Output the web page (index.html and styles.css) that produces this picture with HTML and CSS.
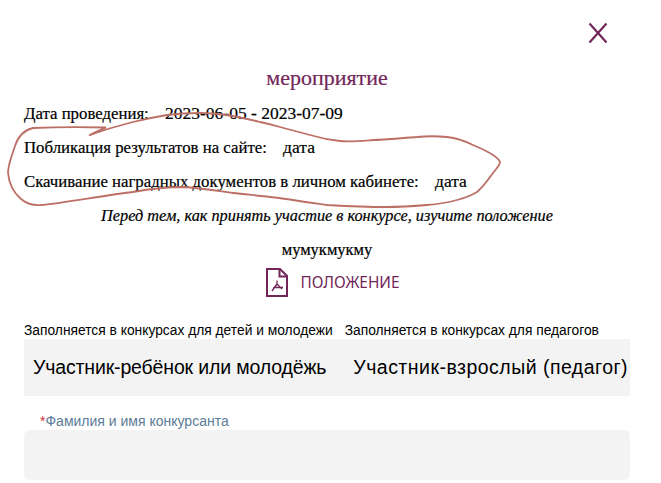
FILE: index.html
```html
<!DOCTYPE html>
<html lang="ru">
<head>
  <meta charset="UTF-8" />
  <title>Мероприятие</title>
  <link rel="stylesheet" href="styles.css">
</head>
<body>
  <div class="container">
    <div class="close-row">
      <svg class="close" width="20" height="22" viewBox="0 0 20 22"><path d="M1.500 1.500L18.500 20.500M18.500 1.500L1.500 20.500"/></svg>
    </div>
    <h1>мероприятие</h1>
    <p class="date">Дата проведения: <span class="value">2023-06-05 - 2023-07-09</span></p>
    <p class="date">Побликация результатов на сайте: <span class="value">дата</span></p>
    <p class="date">Скачивание наградных документов в личном кабинете: <span class="value">дата</span></p>
    <p class="note">Перед тем, как принять участие в конкурсе, изучите положение</p>
    <p class="desc">мумукмукму</p>
    <a class="doc" href="#">
      <svg class="pdf" width="22" height="29" viewBox="0 0 22 29">
        <path class="sheet" d="M1 1H14L21 8V28H1Z"/>
        <path class="sheet" d="M13.500 1V8.500H21"/>
        <path class="acro" d="M11 12.500V16L6 23M11 16L16 21M11 16.500L8 19.500H17"/>
      </svg>
      <span>ПОЛОЖЕНИЕ</span>
    </a>
    <div class="hints">
      <span>Заполняется в конкурсах для детей и молодежи</span>
      <span>Заполняется в конкурсах для педагогов</span>
    </div>
    <div class="tabs">
      <span class="tab-child">Участник-ребёнок или молодёжь</span>
      <span class="tab-adult">Участник-взрослый (педагог)</span>
    </div>
    <label class="field-label"><span class="req">*</span>Фамилия и имя конкурсанта</label>
    <div class="input"></div>
  </div>
  <svg class="scribble" width="661" height="483" viewBox="0 0 661 483">
    <path d="M89 135.500C95 132 100 130 106 127.500C85 127 55 127 33 128C24 130 18 137 15 146C11 158 8 165 8 173C9 184 14 193 21 199C27 204 33 206 42 205C65 203 100 196 133 192C155 188 170 187 183 187C200 188 218 191 233 193C250 195 275 197 293 200C310 203 320 204 327 205C345 206 370 207 387 207C400 207 415 206 427 205C440 204 450 202 457 200C465 198 472 195 477 192C483 187 488 180 493 173C497 168 500 165 500 162C499 159 496 157 493 155C487 151 480 148 473 145C465 141 457 138 447 137C437 136 427 136 417 137C402 138 385 140 373 140C360 141 350 142 340 141C330 140 320 138 310 135C300 132 290 130 280 127C270 124 265 123 260 122C245 118 220 113 200 113C185 113 175 114 167 115C155 117 145 119 133 122C118 126 100 131 89 135.500"/>
  </svg>
</body>
</html>
```

FILE: styles.css
```css
html, body {
  margin: 0;
  height: 483px;
  overflow: hidden;
  background: #fff;
}
body {
  font-family: 'Liberation Serif', serif;
  color: #000;
  position: relative;
  -webkit-text-stroke: 0.200px;
}
.container {
  padding: 0 31px 0 24px;
}
.close-row {
  display: flex;
  justify-content: flex-end;
  padding: 22px 22px 0 0;
}
.close {
  display: block;
}
.close path {
  fill: none;
  stroke: #722658;
  stroke-width: 2.200;
}
h1 {
  margin: 22px 0 0;
  font-size: 22px;
  line-height: 24px;
  font-weight: 400;
  text-align: center;
  color: #722658;
}
.date {
  margin: 13px 0 0;
  font-size: 16.800px;
  line-height: 21px;
}
.value {
  margin-left: 12px;
  font-size: 17.500px;
}
.note {
  margin: 13px 0 0;
  font-size: 16.300px;
  line-height: 21px;
  font-style: italic;
  text-align: center;
}
.desc {
  margin: 13px 0 0;
  font-size: 16.500px;
  line-height: 21px;
  text-align: center;
}
.doc {
  display: flex;
  justify-content: center;
  align-items: center;
  gap: 12px;
  margin: 8px 0 0 12px;
  color: #722658;
  font-family: 'Noto Sans', sans-serif;
  font-size: 15.400px;
  text-decoration: none;
  -webkit-text-stroke: 0;
}
.pdf {
  display: block;
}
.sheet {
  fill: none;
  stroke: #722658;
  stroke-width: 2;
}
.acro {
  fill: none;
  stroke: #722658;
  stroke-width: 1.300;
}
.hints {
  display: flex;
  gap: 12px;
  margin-top: 26px;
  font-family: 'Liberation Sans', sans-serif;
  font-size: 13.800px;
  line-height: 16px;
  white-space: nowrap;
  -webkit-text-stroke: 0;
}
.tabs {
  display: flex;
  gap: 27px;
  height: 57px;
  align-items: center;
  padding-left: 9px;
  background: #f3f3f3;
  font-family: 'Liberation Sans', sans-serif;
  font-size: 19.500px;
  white-space: nowrap;
  -webkit-text-stroke: 0;
}
.tab-child {
  letter-spacing: -0.150px;
}
.tab-adult {
  letter-spacing: 0.480px;
}
.field-label {
  display: block;
  margin: 16px 0 0 16px;
  font-family: 'Liberation Sans', sans-serif;
  font-size: 14px;
  line-height: 18px;
  color: #5b7b96;
  -webkit-text-stroke: 0;
}
.req {
  color: #c9302c;
}
.input {
  height: 50px;
  border-radius: 6px;
  background: #f3f3f3;
}
.scribble {
  position: absolute;
  top: 0;
  left: 0;
  pointer-events: none;
}
.scribble path {
  fill: none;
  stroke: #bb6f65;
  stroke-width: 1.800;
}
```
